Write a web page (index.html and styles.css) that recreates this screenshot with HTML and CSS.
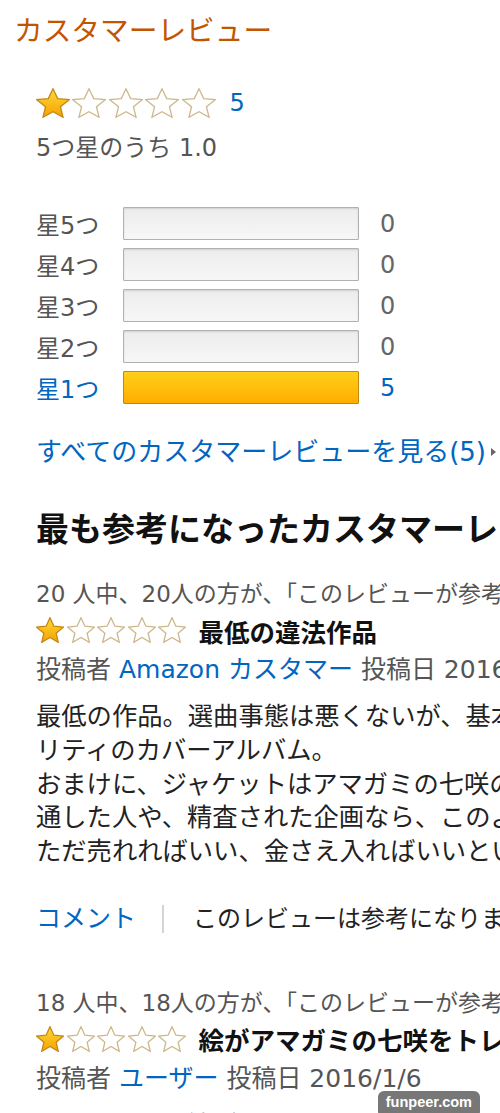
FILE: index.html
```html
<!DOCTYPE html>
<html lang="ja">
<head>
    <meta charset="UTF-8">
    <meta name="viewport" content="width=device-width, initial-scale=1.0">
    <title>カスタマーレビュー</title>
    <link rel="stylesheet" href="styles.css">
</head>
<body>
    <svg class="defs" aria-hidden="true">
        <defs>
            <linearGradient id="gold" x1="0" y1="0" x2="0" y2="1">
                <stop offset="0" stop-color="#ffd83a"/>
                <stop offset="1" stop-color="#f5a200"/>
            </linearGradient>
            <polygon id="star" vector-effect="non-scaling-stroke" points="12,2 14.9,8.6 22,9.3 16.6,14 18.2,21 12,17.3 5.8,21 7.4,14 2,9.3 9.1,8.6"/>
        </defs>
    </svg>

    <div class="page">
        <h2 class="title">カスタマーレビュー</h2>

        <div class="summary">
            <span class="stars big">
                <svg class="star full" viewBox="1.5 1.5 21 20" preserveAspectRatio="none"><use href="#star"/></svg>
                <svg class="star" viewBox="1.5 1.5 21 20" preserveAspectRatio="none"><use href="#star"/></svg>
                <svg class="star" viewBox="1.5 1.5 21 20" preserveAspectRatio="none"><use href="#star"/></svg>
                <svg class="star" viewBox="1.5 1.5 21 20" preserveAspectRatio="none"><use href="#star"/></svg>
                <svg class="star" viewBox="1.5 1.5 21 20" preserveAspectRatio="none"><use href="#star"/></svg>
            </span>
            <a class="link total">5</a>
        </div>
        <div class="avg">5つ星のうち 1.0</div>

        <div class="hist">
            <span class="hist-label">星5つ</span><span class="bar"></span><span class="hist-count">0</span>
            <span class="hist-label">星4つ</span><span class="bar"></span><span class="hist-count">0</span>
            <span class="hist-label">星3つ</span><span class="bar"></span><span class="hist-count">0</span>
            <span class="hist-label">星2つ</span><span class="bar"></span><span class="hist-count">0</span>
            <a class="hist-label link">星1つ</a><span class="bar filled"></span><a class="hist-count link">5</a>
        </div>

        <div class="all-link"><a class="link">すべてのカスタマーレビューを見る(5)</a><span class="caret"></span></div>

        <h3 class="heading">最も参考になったカスタマーレビュー</h3>

        <div class="review">
            <div class="helpful">20 人中、20人の方が、「このレビューが参考になった」と投票しています。</div>
            <div class="review-head">
                <span class="stars small">
                    <svg class="star full" viewBox="1.5 1.5 21 20" preserveAspectRatio="none"><use href="#star"/></svg>
                    <svg class="star" viewBox="1.5 1.5 21 20" preserveAspectRatio="none"><use href="#star"/></svg>
                    <svg class="star" viewBox="1.5 1.5 21 20" preserveAspectRatio="none"><use href="#star"/></svg>
                    <svg class="star" viewBox="1.5 1.5 21 20" preserveAspectRatio="none"><use href="#star"/></svg>
                    <svg class="star" viewBox="1.5 1.5 21 20" preserveAspectRatio="none"><use href="#star"/></svg>
                </span>
                <span class="review-title">最低の違法作品</span>
            </div>
            <div class="byline">投稿者 <a class="link">Amazon カスタマー</a> 投稿日 2016/1/6</div>
            <div class="review-body">
                最低の作品。選曲事態は悪くないが、基本的には低クオ<br>
                リティのカバーアルバム。<br>
                おまけに、ジャケットはアマガミの七咲の絵をトレースしたもの。<br>
                通した人や、精査された企画なら、このようなことはしない。<br>
                ただ売れればいい、金さえ入ればいいという作品です。
            </div>
            <div class="review-foot">
                <a class="link">コメント</a>
                <span class="sep"></span>
                <span>このレビューは参考になりましたか？</span>
            </div>
        </div>

        <div class="review second">
            <div class="helpful">18 人中、18人の方が、「このレビューが参考になった」と投票しています。</div>
            <div class="review-head">
                <span class="stars small">
                    <svg class="star full" viewBox="1.5 1.5 21 20" preserveAspectRatio="none"><use href="#star"/></svg>
                    <svg class="star" viewBox="1.5 1.5 21 20" preserveAspectRatio="none"><use href="#star"/></svg>
                    <svg class="star" viewBox="1.5 1.5 21 20" preserveAspectRatio="none"><use href="#star"/></svg>
                    <svg class="star" viewBox="1.5 1.5 21 20" preserveAspectRatio="none"><use href="#star"/></svg>
                    <svg class="star" viewBox="1.5 1.5 21 20" preserveAspectRatio="none"><use href="#star"/></svg>
                </span>
                <span class="review-title">絵がアマガミの七咲をトレースしたもの</span>
            </div>
            <div class="byline">投稿者 <a class="link">ユーザー</a> 投稿日 2016/1/6</div>
            <div class="review-body">
                ジャケットの絵がアマガミの七咲をそのままトレースしています。
            </div>
        </div>
    </div>

    <div class="watermark">funpeer.com</div>
</body>
</html>
```

FILE: styles.css
```css
html { overflow: hidden; }
body { margin: 0; background: #fff; color: #111; font-family: "DejaVu Sans", "Noto Sans CJK JP", sans-serif; font-size: 24px; }
.defs { position: absolute; width: 0; height: 0; overflow: hidden; }
.page { width: 500px; overflow: hidden; padding-left: 36px; box-sizing: border-box; }
.page > * { white-space: nowrap; }
.link { color: #0066c0; text-decoration: none; }

.title { margin: 11px 0 0 -22px; font-size: 28.7px; line-height: 40px; font-weight: normal; color: #c45500; }

.summary { display: flex; align-items: center; margin-top: 37px; height: 30px; }
.stars { display: flex; }
.star use { fill: #fff; stroke: #cdb88c; stroke-width: 1.3; }
.star.full use { fill: url(#gold); stroke: #c48816; }
.stars.big { gap: 2.4px; }
.stars.big .star { width: 34px; height: 30px; }
.total { margin-left: 14px; font-size: 24px; }
.avg { margin-top: 15px; line-height: 30px; color: #555; }

.hist { display: grid; grid-template-columns: 87px 236px auto; grid-auto-rows: 33px; row-gap: 8px; align-items: center; margin-top: 44px; }
.hist-label { color: #555; }
.hist-label.link, .hist-count.link { color: #0066c0; }
.hist-count { margin-left: 21px; color: #666; }
.bar { height: 33px; box-sizing: border-box; border: 1px solid #aeb1b5; border-radius: 1px; background: linear-gradient(#ececec, #f7f7f7); box-shadow: inset 0 1px 2px rgba(0,0,0,0.12); }
.bar.filled { border-color: #c08a10; background: linear-gradient(#ffcf1a, #ffad00); box-shadow: none; }

.all-link { display: flex; align-items: center; margin-top: 31px; line-height: 34px; font-size: 26px; }
.caret { margin-left: 5px; width: 0; height: 0; border-left: 5px solid #666; border-top: 4px solid transparent; border-bottom: 4px solid transparent; }

.heading { margin: 39px 0 0; font-size: 33px; line-height: 44px; font-weight: bold; color: #111; }

.review { margin-top: 25px; }
.review.second { margin-top: 50px; }
.helpful { line-height: 34px; font-size: 23px; color: #555; }
.review-head { display: flex; align-items: center; height: 34px; margin-top: 2px; }
.stars.small { gap: 2.6px; margin-right: 12px; }
.stars.small .star { width: 28px; height: 26px; }
.review-title { font-weight: bold; font-size: 25.5px; color: #111; }
.byline { margin-top: 6px; line-height: 34px; font-size: 25px; color: #555; }
.review-body { margin-top: 13px; line-height: 33.75px; font-size: 25.3px; color: #222; }
.review-foot { display: flex; align-items: center; margin-top: 33px; line-height: 34px; color: #222; }
.review-foot .link { font-size: 25px; }
.sep { flex: none; width: 2px; height: 28px; background: #d4d4d4; margin: 0 29px 0 26px; }

.watermark { position: fixed; right: 20px; bottom: -5px; padding: 2px 8px 7px; border-radius: 6px; background: #777; color: #fff; font: bold 14.5px "Liberation Sans", sans-serif; line-height: 18px; }
```
